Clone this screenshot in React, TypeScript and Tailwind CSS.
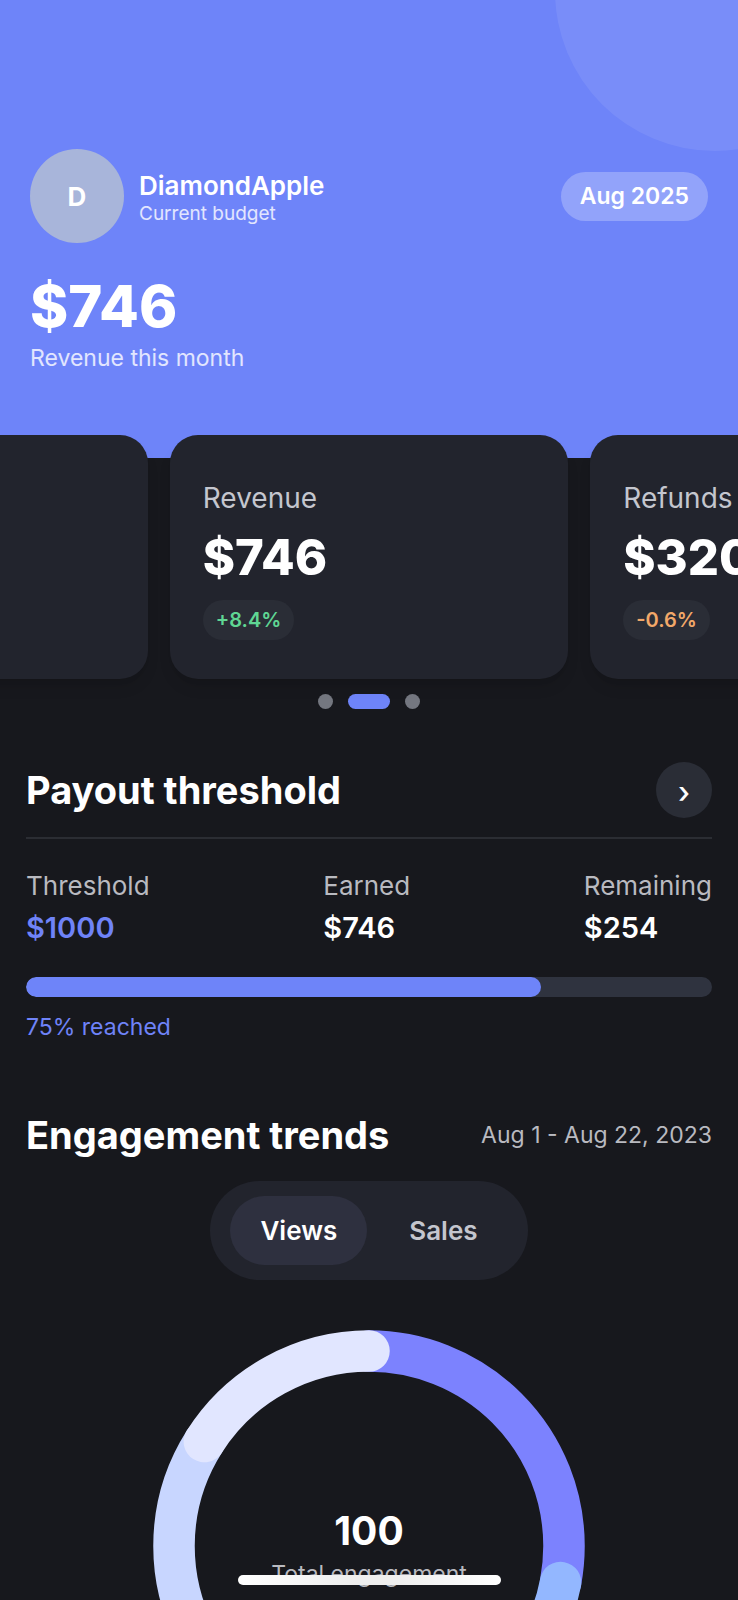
import { useState } from "react";

type Metric = {
  id: string;
  label?: string;
  value?: string;
  change?: string;
  tone?: string;
};

const metrics: Metric[] = [
  { id: "previous" },
  { id: "revenue", label: "Revenue", value: "$746", change: "+8.4%", tone: "text-[#5fd693]" },
  { id: "refunds", label: "Refunds", value: "$320", change: "-0.6%", tone: "text-[#f2a869]" },
];

const stats = [
  { label: "Threshold", value: "$1000", tone: "text-[#6f83f8]" },
  { label: "Earned", value: "$746", tone: "text-white" },
  { label: "Remaining", value: "$254", tone: "text-white" },
];

const segments = [
  { share: 28, color: "#7c82fe" },
  { share: 32, color: "#93b7ff" },
  { share: 24, color: "#c8d6ff" },
  { share: 16, color: "#e1e6ff" },
];

function Header() {
  return (
    <header className="relative overflow-hidden bg-[#6e84f9] px-[30px] pt-[149px] pb-[84px]">
      <div className="absolute -top-[169px] -right-[137px] size-80 rounded-full bg-white/8" />
      <div className="flex items-center justify-between">
        <div className="flex items-center gap-[15px]">
          <div className="flex size-[94px] items-center justify-center rounded-full bg-[#a8b5da] text-[26px] font-bold">
            D
          </div>
          <div className="pt-1">
            <p className="text-[26px] leading-8 font-semibold">DiamondApple</p>
            <p className="text-[19px] leading-6 text-white/80">Current budget</p>
          </div>
        </div>
        <button
          type="button"
          className="h-[49px] rounded-full bg-white/25 px-[19px] text-[23px] font-semibold"
        >
          Aug 2025
        </button>
      </div>
      <p className="mt-[31px] text-[58px] leading-[64px] font-extrabold">$746</p>
      <p className="mt-1 text-[23px] leading-8 text-white/80">Revenue this month</p>
    </header>
  );
}

function MetricCard({ metric }: { metric: Metric }) {
  return (
    <article className="w-[54%] shrink-0 rounded-[28px] bg-[#22242d] px-[33px] pt-[43px] pb-[39px] shadow-lg shadow-black/10">
      {metric.label && (
        <>
          <h2 className="text-[28px] leading-10 text-[#c4c6ce]">{metric.label}</h2>
          <p className="mt-3 text-[49px] leading-[56px] font-extrabold">{metric.value}</p>
          <span
            className={`mt-[14px] flex h-10 w-fit items-center rounded-full bg-[#2a2d36] px-[13px] text-[20px] font-semibold ${metric.tone}`}
          >
            {metric.change}
          </span>
        </>
      )}
    </article>
  );
}

function Payout() {
  return (
    <section className="mt-[53px] px-[26px]">
      <div className="flex items-center justify-between border-b-2 border-[#2b2d33] pb-[19px]">
        <h2 className="text-[38px] leading-[48px] font-bold">Payout threshold</h2>
        <button
          type="button"
          aria-label="Open payout threshold"
          className="size-14 rounded-full bg-[#2a2d36] pt-1 text-[30px] leading-8 font-medium"
        >
          ›
        </button>
      </div>
      <dl className="mt-[31px] flex justify-between">
        {stats.map((stat) => (
          <div key={stat.label}>
            <dt className="text-[26px] leading-8 text-[#b9bac0]">{stat.label}</dt>
            <dd className={`mt-2 text-[29px] leading-9 font-semibold ${stat.tone}`}>{stat.value}</dd>
          </div>
        ))}
      </dl>
      <div className="mt-[31px] h-5 overflow-hidden rounded-full bg-[#2f333f]">
        <div className="h-full w-3/4 rounded-full bg-[#6e84f9]" />
      </div>
      <p className="mt-4 text-[23px] leading-7 text-[#6f83f8]">75% reached</p>
    </section>
  );
}

function Donut() {
  const starts = segments.map((_, i) =>
    segments.slice(0, i).reduce((sum, segment) => sum + segment.share, 0),
  );
  return (
    <div className="relative mx-auto mt-[50px] w-[432px] max-w-full">
      <svg viewBox="0 0 432 432" className="block w-full" aria-hidden="true">
        <g fill="none" strokeWidth="41.5" strokeLinecap="round" transform="rotate(-90 216 216)">
          {segments.map((segment, i) => (
            <circle
              key={segment.color}
              cx="216"
              cy="216"
              r="195"
              pathLength="100"
              stroke={segment.color}
              strokeDasharray={`${segment.share} ${100 - segment.share}`}
              strokeDashoffset={-starts[i]}
            />
          ))}
        </g>
      </svg>
      <div className="absolute inset-0 flex flex-col items-center justify-center pt-1">
        <p className="text-[39px] leading-[48px] font-bold">100</p>
        <p className="mt-[3px] text-[23px] leading-8 text-[#b9bac0]">Total engagement</p>
      </div>
    </div>
  );
}

function Engagement() {
  const [active, setActive] = useState("Views");
  return (
    <section className="mt-[70px] px-[26px] pb-16">
      <div className="flex items-center justify-between">
        <h2 className="text-[38px] leading-[48px] font-bold">Engagement trends</h2>
        <p className="text-[23px] leading-7 text-[#b9bac0]">Aug 1 - Aug 22, 2023</p>
      </div>
      <div className="mx-auto mt-[22px] flex w-fit gap-3 rounded-full bg-[#22242d] px-5 py-[15px]">
        {["Views", "Sales"].map((name) => (
          <button
            key={name}
            type="button"
            aria-pressed={active === name}
            onClick={() => setActive(name)}
            className={`h-[69px] rounded-full px-[30px] text-[26px] font-semibold ${
              active === name ? "bg-[#2e303f] text-white" : "text-[#c4c6ce]"
            }`}
          >
            {name}
          </button>
        ))}
      </div>
      <Donut />
    </section>
  );
}

export default function App() {
  return (
    <div className="h-screen overflow-x-hidden overflow-y-auto bg-[#17181d] font-['Inter',sans-serif] text-white [scrollbar-width:none]">
      <Header />
      <main>
        <div className="relative -mt-[23px] flex justify-center gap-[22px]">
          {metrics.map((metric) => (
            <MetricCard key={metric.id} metric={metric} />
          ))}
        </div>
        <div className="mt-[15px] flex justify-center gap-[15px]">
          <span className="size-[15px] rounded-full bg-[#747780]" />
          <span className="h-[15px] w-[42px] rounded-full bg-[#6e84f9]" />
          <span className="size-[15px] rounded-full bg-[#747780]" />
        </div>
        <Payout />
        <Engagement />
      </main>
      <div className="fixed inset-x-0 bottom-[15px] mx-auto h-[10px] w-[263px] rounded-full bg-[linear-gradient(90deg,#fff,#eee_45%,#eee_60%,#fff)]" />
    </div>
  );
}
